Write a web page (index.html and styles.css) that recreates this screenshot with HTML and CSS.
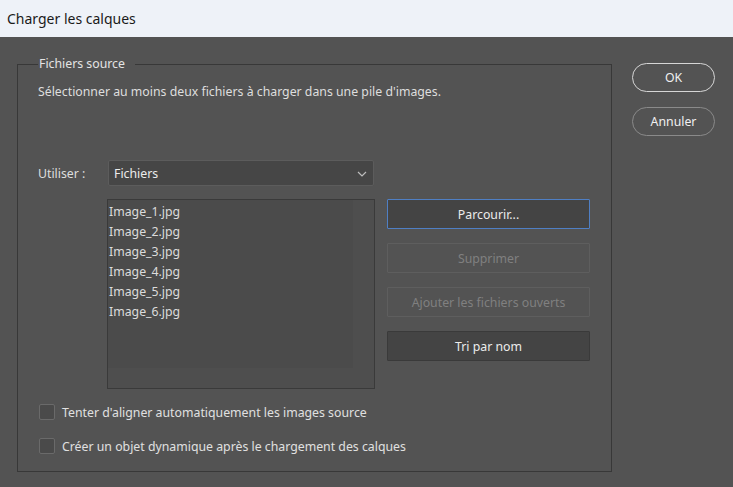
FILE: index.html
```html
<!DOCTYPE html>
<html lang="fr">
<head>
<meta charset="utf-8">
<title>Charger les calques</title>
<link rel="stylesheet" href="styles.css">
</head>
<body>
<div class="window">
  <div class="titlebar">Charger les calques</div>
  <div class="content">
    <fieldset class="group">
      <legend class="legend">Fichiers source</legend>
      <p class="hint">Sélectionner au moins deux fichiers à charger dans une pile d'images.</p>
      <div class="use-row">
        <span class="use-label">Utiliser :</span>
        <div class="select">
          <span>Fichiers</span>
          <svg class="chev" width="10" height="6" viewBox="0 0 10 6"><path d="M1 1 L5 5 L9 1" fill="none" stroke="#bdbdbd" stroke-width="1.2"/></svg>
        </div>
      </div>
      <div class="files-row">
        <div class="listbox">
          <div class="list-items">
            <div class="item">Image_1.jpg</div>
            <div class="item">Image_2.jpg</div>
            <div class="item">Image_3.jpg</div>
            <div class="item">Image_4.jpg</div>
            <div class="item">Image_5.jpg</div>
            <div class="item">Image_6.jpg</div>
          </div>
          <div class="vtrack"></div>
          <div class="htrack"></div>
        </div>
        <div class="actions">
          <button class="btn focus">Parcourir...</button>
          <button class="btn disabled">Supprimer</button>
          <button class="btn disabled">Ajouter les fichiers ouverts</button>
          <button class="btn">Tri par nom</button>
        </div>
      </div>
      <label class="check first"><span class="box"></span>Tenter d'aligner automatiquement les images source</label>
      <label class="check"><span class="box"></span>Créer un objet dynamique après le chargement des calques</label>
    </fieldset>
    <div class="side">
      <button class="pill ok">OK</button>
      <button class="pill cancel">Annuler</button>
    </div>
  </div>
</div>
</body>
</html>
```
FILE: styles.css
```css
* { box-sizing: border-box; }
html, body { margin: 0; padding: 0; }
body {
  width: 733px;
  height: 487px;
  overflow: hidden;
  background: #535353;
  font-family: "Noto Sans", "DejaVu Sans", sans-serif;
  font-size: 12.3px;
  color: #dedede;
}
.window { width: 733px; height: 487px; display: flex; flex-direction: column; }
.titlebar {
  height: 37px;
  background: #eef2f8;
  color: #1a1a1a;
  font-size: 14px;
  padding-left: 7px;
  display: flex;
  align-items: center;
}
.content {
  display: flex;
  padding: 19px 0 0 17px;
}
.group {
  margin: 0;
  width: 595px;
  height: 416px;
  border: 1px solid #383838;
  padding: 0 20px 0 20px;
}
.legend {
  padding: 0 10px 0 1px;
  margin-left: 0;
  line-height: 16px;
  color: #e4e4e4;
}
.hint { margin: 11px 0 0 0; line-height: 18px; }
.use-row {
  display: flex;
  align-items: center;
  margin-top: 59px;
}
.use-label { width: 70px; }
.select {
  width: 266px;
  height: 26px;
  background: #464646;
  border: 1px solid #5c5c5c;
  border-radius: 2px;
  display: flex;
  align-items: center;
  justify-content: space-between;
  padding: 0 6px 0 5px;
  color: #ececec;
}
.chev { margin-top: 1px; }
.files-row {
  display: flex;
  margin-top: 13px;
  margin-left: 69px;
  gap: 12px;
}
.listbox {
  position: relative;
  width: 268px;
  height: 190px;
  border: 1px solid #3a3a3a;
  background: #4b4b4b;
}
.list-items { padding: 2px 0 0 1px; }
.item { height: 20px; line-height: 20px; color: #dcdcdc; }
.vtrack {
  position: absolute;
  right: 0; top: 0;
  width: 21px; height: 168px;
  background: #4e4e4e;
}
.htrack {
  position: absolute;
  left: 0; bottom: 0;
  width: 100%; height: 20px;
  background: #4e4e4e;
}
.actions { display: flex; flex-direction: column; gap: 14px; }
.btn {
  width: 203px;
  height: 30px;
  font: inherit;
  color: #ececec;
  background: #444444;
  border: 1px solid #3a3a3a;
  border-radius: 1px;
  padding: 0;
}
.btn.focus { border: 1.5px solid #4f7fc4; }
.btn.disabled { background: #535353; border-color: #5e5e5e; color: #808080; }
.check {
  display: flex;
  align-items: center;
  gap: 7px;
  height: 18px;
  margin-top: 16px;
  color: #e0e0e0;
}
.check.first { margin-top: 14px; }
.box {
  width: 16px; height: 16px;
  border: 1px solid #6a6a6a;
  border-radius: 2px;
  background: #4a4a4a;
  margin-left: 1px;
}
.side {
  display: flex;
  flex-direction: column;
  gap: 15px;
  margin-left: 20px;
  padding-top: 7px;
}
.pill {
  width: 83px;
  height: 29px;
  border-radius: 15px;
  background: #535353;
  color: #f0f0f0;
  font: inherit;
  padding: 0;
}
.pill.ok { border: 1.5px solid #d6d6d6; }
.pill.cancel { border: 1px solid #8a8a8a; }
```
